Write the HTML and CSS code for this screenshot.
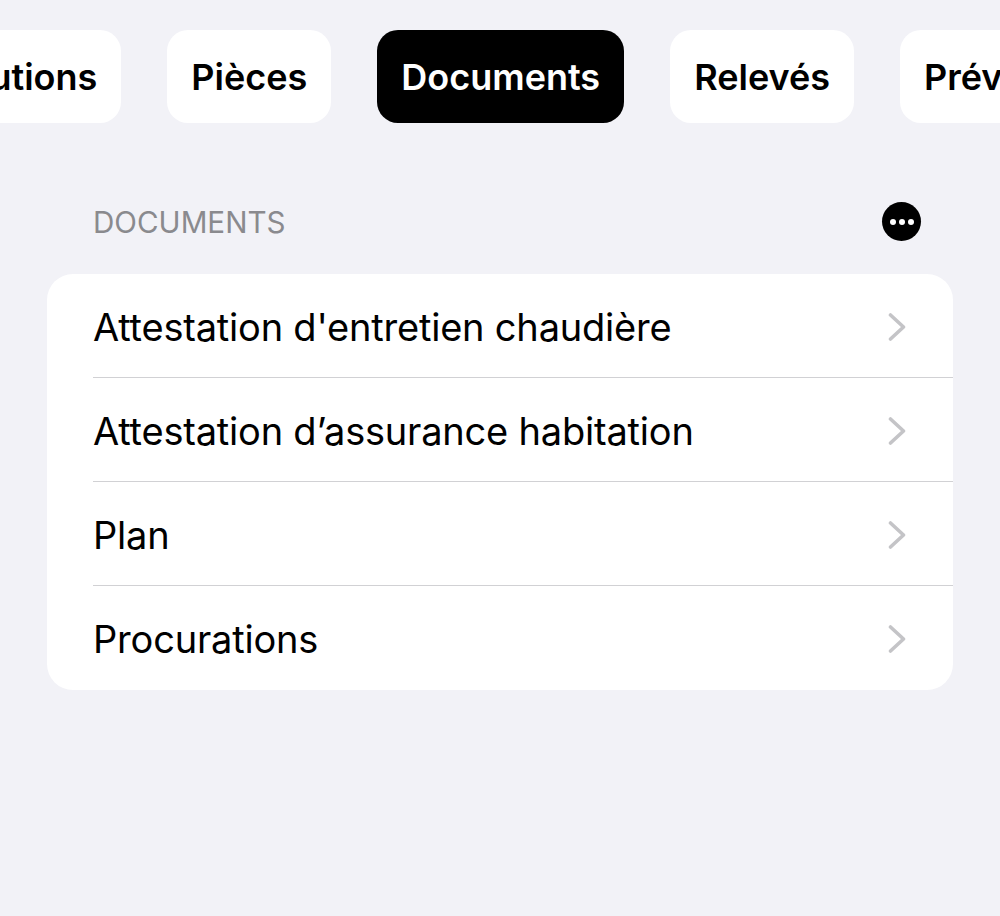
FILE: index.html
```html
<!DOCTYPE html>
<html lang="fr">
<head>
<meta charset="utf-8">
<title>Documents</title>
<link rel="stylesheet" href="styles.css">
</head>
<body>
<nav class="tabs">
  <a class="tab tab-first">Résolutions</a>
  <a class="tab">Pièces</a>
  <a class="tab active">Documents</a>
  <a class="tab">Relevés</a>
  <a class="tab">Prévisions</a>
</nav>
<section class="section">
  <header class="section-head">
    <h2 class="section-title">DOCUMENTS</h2>
    <span class="more" aria-label="Plus"><i></i><i></i><i></i></span>
  </header>
  <ul class="list">
    <li class="row"><span class="label">Attestation d'entretien chaudière</span>
      <svg class="chev" viewBox="0 0 18 30"><path d="M2.5 3 15.5 15 2.5 27"/></svg></li>
    <li class="row"><span class="label">Attestation d’assurance habitation</span>
      <svg class="chev" viewBox="0 0 18 30"><path d="M2.5 3 15.5 15 2.5 27"/></svg></li>
    <li class="row"><span class="label">Plan</span>
      <svg class="chev" viewBox="0 0 18 30"><path d="M2.5 3 15.5 15 2.5 27"/></svg></li>
    <li class="row"><span class="label">Procurations</span>
      <svg class="chev" viewBox="0 0 18 30"><path d="M2.5 3 15.5 15 2.5 27"/></svg></li>
  </ul>
</section>
</body>
</html>
```
FILE: styles.css
```css
* { box-sizing: border-box; }
html, body { margin: 0; height: 100%; }
body {
  width: 1000px;
  height: 916px;
  overflow: hidden;
  background: #f2f2f7;
  font-family: Inter, "Liberation Sans", sans-serif;
  color: #000;
}
.tabs {
  display: flex;
  gap: 46px;
  padding-top: 30px;
  height: 123px;
  white-space: nowrap;
}
.tab {
  flex: none;
  height: 93px;
  padding: 0 24px;
  display: flex;
  align-items: center;
  background: #fff;
  border-radius: 21px;
  font-size: 36px;
  font-weight: 600;
}
.tab-first { margin-left: -130px; }
.tab.active { background: #000; color: #fff; }
.section { padding: 0 47px; }
.section-head {
  display: flex;
  align-items: center;
  justify-content: space-between;
  padding: 79px 32px 33px 46px;
  height: 151px;
}
.section-title {
  margin: 0;
  font-size: 29.6px;
  font-weight: 400;
  color: #8a8a8e;
}
.more {
  width: 39px;
  height: 39px;
  border-radius: 50%;
  background: #000;
  display: flex;
  align-items: center;
  justify-content: center;
  gap: 3px;
}
.more i {
  width: 6px;
  height: 6px;
  border-radius: 50%;
  background: #fff;
}
.list {
  list-style: none;
  margin: 0;
  padding: 0 0 0 46px;
  background: #fff;
  border-radius: 26px;
}
.row {
  height: 104px;
  display: flex;
  align-items: center;
  justify-content: space-between;
  padding-top: 2px;
  padding-right: 47px;
  border-bottom: 1.5px solid #d1d1d4;
}
.row:last-child { border-bottom: 0; }
.label { font-size: 38px; font-weight: 400; letter-spacing: -0.2px; }
.chev { width: 18px; height: 30px; flex: none; }
.chev path { fill: none; stroke: #c4c4c7; stroke-width: 3.6; stroke-linecap: round; stroke-linejoin: round; }
```
